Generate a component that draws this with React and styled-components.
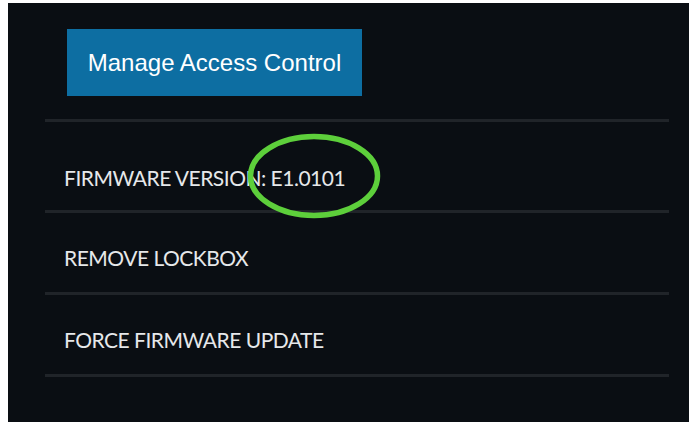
import styled, { createGlobalStyle } from "styled-components";

const GlobalStyle = createGlobalStyle`
    body {
        margin: 0;
        background: #ffffff;
    }
`;

const Panel = styled.div`
    position: relative;
    box-sizing: border-box;
    width: 681px;
    height: 419px;
    margin: 3px 0 0 8px;
    padding-top: 26px;
    background-color: #0a0e13;
    overflow: hidden;
`;

const ManageBtn = styled.button`
    display: flex;
    align-items: center;
    justify-content: center;
    width: 295px;
    height: 67px;
    margin-left: 59px;
    padding: 0;
    border: none;
    background-color: #0d6ea2;
    color: #ffffff;
    font-family: "Liberation Sans", Arial, sans-serif;
    font-size: 24px;
    cursor: pointer;
`;

const List = styled.ul`
    list-style: none;
    margin: 23px 20px 0 37px;
    padding: 0;
    border-top: 3px solid #202429;
`;

const Row = styled.li`
    display: flex;
    align-items: center;
    box-sizing: content-box;
    height: ${(p) => (p.$first ? "66px" : "69px")};
    padding: ${(p) => (p.$first ? "22px" : "10px")} 0 0 19px;
    border-bottom: 3px solid #202429;
    color: #e6e8ea;
    font-family: Lato, "Open Sans", sans-serif;
    font-size: 21px;
    letter-spacing: -0.5px;
`;

const Highlight = styled.svg`
    position: absolute;
    left: 236px;
    top: 127px;
    width: 140px;
    height: 92px;
    pointer-events: none;
`;

function App() {
    return (
        <>
        <GlobalStyle />
        <Panel>
            <ManageBtn>Manage Access Control</ManageBtn>
            <List>
                <Row $first>FIRMWARE VERSION: E1.0101</Row>
                <Row>REMOVE LOCKBOX</Row>
                <Row>FORCE FIRMWARE UPDATE</Row>
            </List>
            <Highlight viewBox="0 0 140 92">
                <ellipse cx="70" cy="46" rx="63.5" ry="39.5" fill="none" stroke="#5dcf3b" strokeWidth="5.5" />
            </Highlight>
        </Panel>
        </>
    );
}

export default App;
